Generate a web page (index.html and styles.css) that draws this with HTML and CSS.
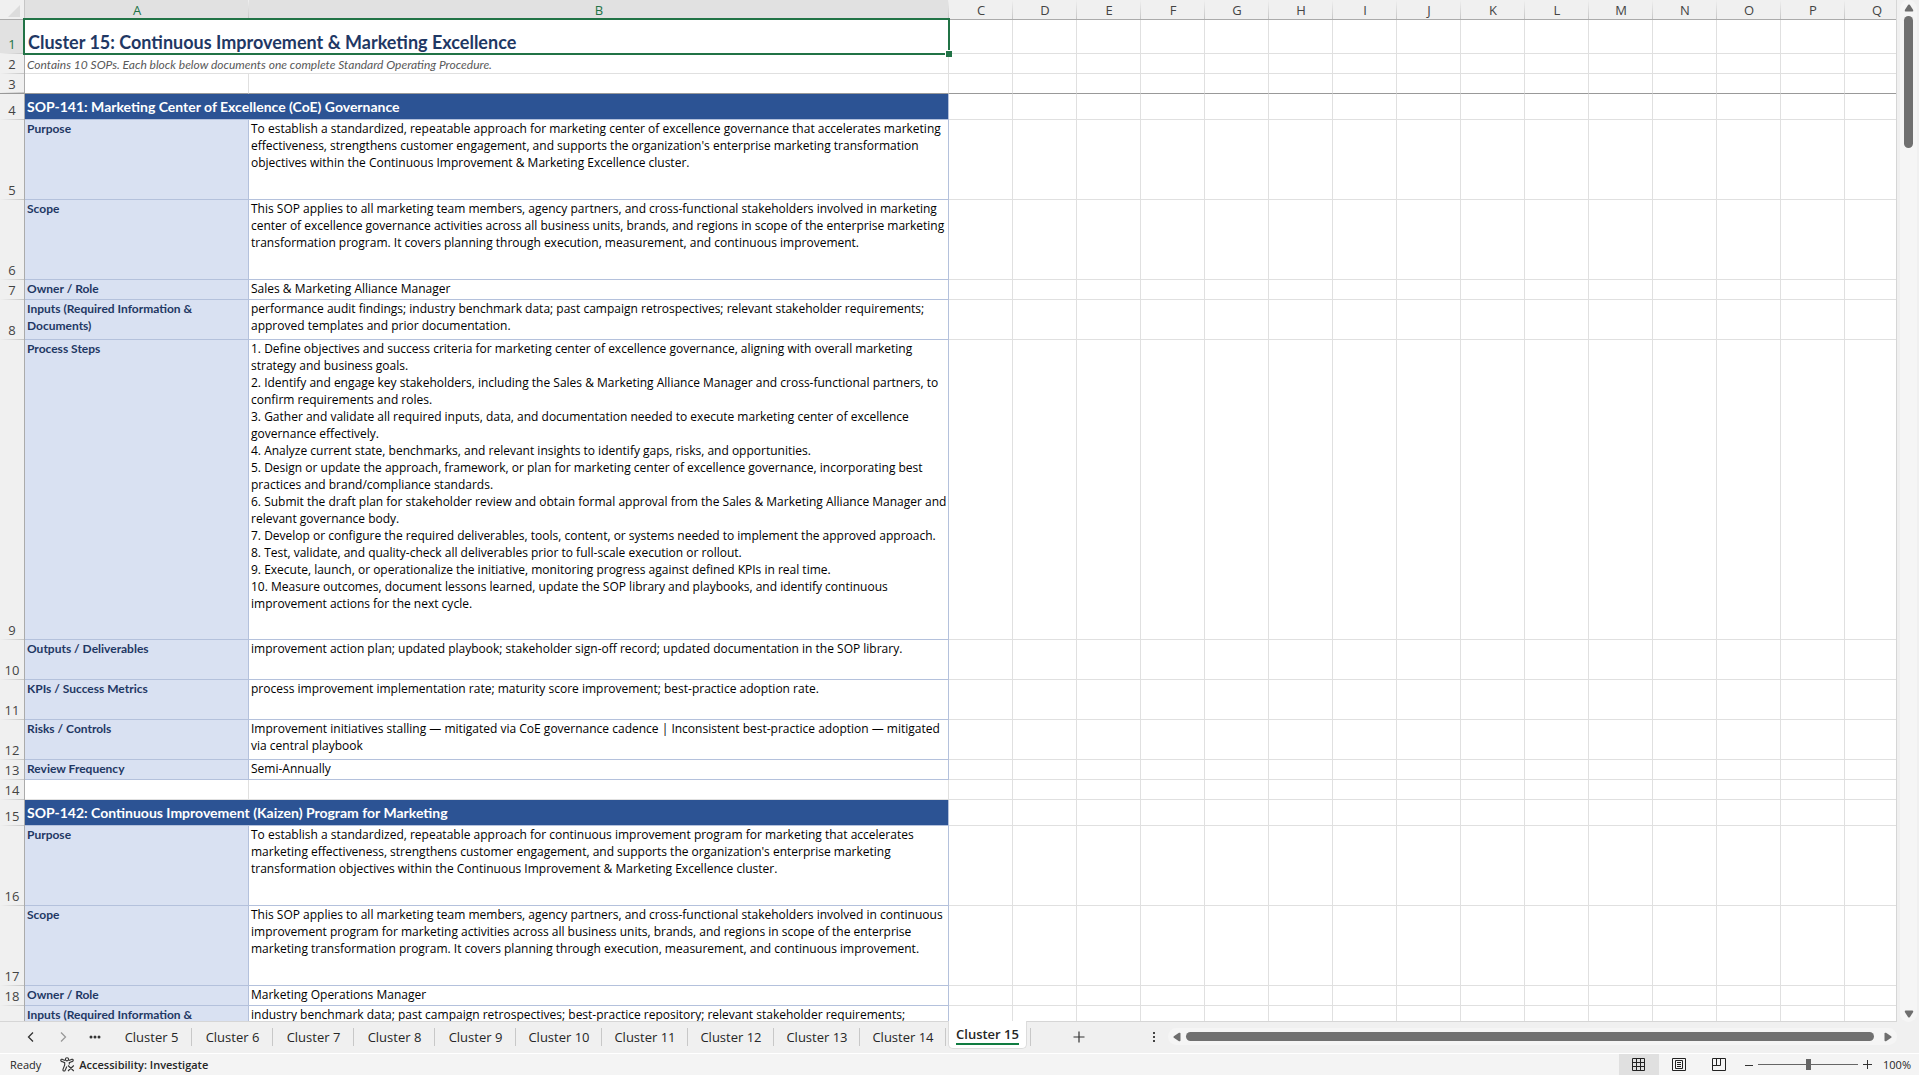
FILE: index.html
```html
<!DOCTYPE html>
<html lang="en">
<head>
    <meta charset="UTF-8">
    <meta name="viewport" content="width=device-width, initial-scale=1.0">
    <title>Marketing SOP Library</title>
    <link rel="stylesheet" href="styles.css">
</head>
<body>
    <main class="workspace">
        <div class="sheet">
            <table id="grid">
                <colgroup>
                    <col class="col-num">
                    <col class="col-a">
                    <col class="col-b">
                    <col class="col-rest" span="15">
                </colgroup>
                <thead>
                    <tr id="letters">
                        <th class="corner"><svg width="12" height="12" viewBox="0 0 12 12"><path d="M12 0v12H0z" fill="#dcdcdc"/></svg></th>
                        <th class="active">A</th>
                        <th class="active">B</th>
                    </tr>
                </thead>
                <tbody>
                    <tr class="row-title"><th class="active">1</th><td colspan="2" class="title">Cluster 15: Continuous Improvement &amp; Marketing Excellence<span class="handle"></span></td></tr>
                    <tr><th>2</th><td colspan="2" class="subtitle">Contains 10 SOPs. Each block below documents one complete Standard Operating Procedure.</td></tr>
                    <tr class="frozen"><th>3</th><td></td><td></td></tr>

                    <tr class="row-section"><th>4</th><td colspan="2" class="section">SOP-141: Marketing Center of Excellence (CoE) Governance</td></tr>
                    <tr class="row-80"><th>5</th><td class="label">Purpose</td><td class="text">To establish a standardized, repeatable approach for marketing center of excellence governance that accelerates marketing effectiveness, strengthens customer engagement, and supports the organization's enterprise marketing transformation objectives within the Continuous Improvement &amp; Marketing Excellence cluster.</td></tr>
                    <tr class="row-80"><th>6</th><td class="label">Scope</td><td class="text">This SOP applies to all marketing team members, agency partners, and cross-functional stakeholders involved in marketing center of excellence governance activities across all business units, brands, and regions in scope of the enterprise marketing transformation program. It covers planning through execution, measurement, and continuous improvement.</td></tr>
                    <tr><th>7</th><td class="label">Owner / Role</td><td class="text">Sales &amp; Marketing Alliance Manager</td></tr>
                    <tr class="row-40"><th>8</th><td class="label">Inputs (Required Information &amp; Documents)</td><td class="text">performance audit findings; industry benchmark data; past campaign retrospectives; relevant stakeholder requirements; approved templates and prior documentation.</td></tr>
                    <tr class="row-300"><th>9</th><td class="label">Process Steps</td><td class="text">
                        <p>1. Define objectives and success criteria for marketing center of excellence governance, aligning with overall marketing strategy and business goals.</p>
                        <p>2. Identify and engage key stakeholders, including the Sales &amp; Marketing Alliance Manager and cross-functional partners, to confirm requirements and roles.</p>
                        <p>3. Gather and validate all required inputs, data, and documentation needed to execute marketing center of excellence governance effectively.</p>
                        <p>4. Analyze current state, benchmarks, and relevant insights to identify gaps, risks, and opportunities.</p>
                        <p>5. Design or update the approach, framework, or plan for marketing center of excellence governance, incorporating best practices and brand/compliance standards.</p>
                        <p>6. Submit the draft plan for stakeholder review and obtain formal approval from the Sales &amp; Marketing Alliance Manager and relevant governance body.</p>
                        <p>7. Develop or configure the required deliverables, tools, content, or systems needed to implement the approved approach.</p>
                        <p>8. Test, validate, and quality-check all deliverables prior to full-scale execution or rollout.</p>
                        <p>9. Execute, launch, or operationalize the initiative, monitoring progress against defined KPIs in real time.</p>
                        <p>10. Measure outcomes, document lessons learned, update the SOP library and playbooks, and identify continuous improvement actions for the next cycle.</p>
                    </td></tr>
                    <tr class="row-40"><th>10</th><td class="label">Outputs / Deliverables</td><td class="text">improvement action plan; updated playbook; stakeholder sign-off record; updated documentation in the SOP library.</td></tr>
                    <tr class="row-40"><th>11</th><td class="label">KPIs / Success Metrics</td><td class="text">process improvement implementation rate; maturity score improvement; best-practice adoption rate.</td></tr>
                    <tr class="row-40"><th>12</th><td class="label">Risks / Controls</td><td class="text">Improvement initiatives stalling — mitigated via CoE governance cadence | Inconsistent best-practice adoption — mitigated via central playbook</td></tr>
                    <tr><th>13</th><td class="label">Review Frequency</td><td class="text">Semi-Annually</td></tr>
                    <tr><th>14</th><td></td><td></td></tr>

                    <tr class="row-section"><th>15</th><td colspan="2" class="section">SOP-142: Continuous Improvement (Kaizen) Program for Marketing</td></tr>
                    <tr class="row-80"><th>16</th><td class="label">Purpose</td><td class="text">To establish a standardized, repeatable approach for continuous improvement program for marketing that accelerates marketing effectiveness, strengthens customer engagement, and supports the organization's enterprise marketing transformation objectives within the Continuous Improvement &amp; Marketing Excellence cluster.</td></tr>
                    <tr class="row-80"><th>17</th><td class="label">Scope</td><td class="text">This SOP applies to all marketing team members, agency partners, and cross-functional stakeholders involved in continuous improvement program for marketing activities across all business units, brands, and regions in scope of the enterprise marketing transformation program. It covers planning through execution, measurement, and continuous improvement.</td></tr>
                    <tr><th>18</th><td class="label">Owner / Role</td><td class="text">Marketing Operations Manager</td></tr>
                    <tr class="row-40"><th></th><td class="label">Inputs (Required Information &amp;</td><td class="text">industry benchmark data; past campaign retrospectives; best-practice repository; relevant stakeholder requirements;</td></tr>
                </tbody>
            </table>
        </div>
        <div class="vscroll">
            <button aria-label="Scroll up"><svg width="10" height="8" viewBox="0 0 10 8"><path d="M4.2.8Q5 0 5.800.8L9.200 6Q9.500 7.500 8.500 7.500H1.500Q.5 7.500.8 6z"/></svg></button>
            <div class="vthumb"></div>
            <button class="down" aria-label="Scroll down"><svg width="10" height="8" viewBox="0 0 10 8"><path d="M4.200 7.200Q5 8 5.800 7.200L9.200 2Q9.500.5 8.500.5H1.500Q.5.5.8 2z"/></svg></button>
        </div>
    </main>

    <nav class="tabbar">
        <div class="tabnav">
            <button aria-label="Previous sheets"><svg width="10" height="12" viewBox="0 0 10 12"><path d="M7 1.500 2.500 6 7 10.500" fill="none" stroke="#333" stroke-width="1.300"/></svg></button>
            <button aria-label="Next sheets"><svg width="10" height="12" viewBox="0 0 10 12"><path d="M3 1.500 7.500 6 3 10.500" fill="none" stroke="#999" stroke-width="1.300"/></svg></button>
            <button aria-label="More sheets"><svg width="12" height="4" viewBox="0 0 12 4"><g fill="#333"><circle cx="2" cy="2" r="1.500"/><circle cx="6" cy="2" r="1.500"/><circle cx="10" cy="2" r="1.500"/></g></svg></button>
        </div>
        <button class="tab">Cluster 5</button>
        <button class="tab">Cluster 6</button>
        <button class="tab">Cluster 7</button>
        <button class="tab">Cluster 8</button>
        <button class="tab">Cluster 9</button>
        <button class="tab wide">Cluster 10</button>
        <button class="tab wide">Cluster 11</button>
        <button class="tab wide">Cluster 12</button>
        <button class="tab wide">Cluster 13</button>
        <button class="tab wide">Cluster 14</button>
        <button class="tab current"><span>Cluster 15</span></button>
        <button class="add" aria-label="New sheet"><svg width="12" height="12" viewBox="0 0 12 12"><path d="M6 .5v11M.5 6h11" stroke="#333" stroke-width="1.200"/></svg></button>
        <button class="grip" aria-label="Resize tabs"><svg width="4" height="12" viewBox="0 0 4 12"><path d="M1 1h2v2H1zM1 5h2v2H1zM1 9h2v2H1z" fill="#444"/></svg></button>
        <div class="hscroll">
            <button aria-label="Scroll left"><svg width="8" height="10" viewBox="0 0 8 10"><path d="M.8 4.200Q0 5 .8 5.800L6 9.200Q7.500 9.500 7.500 8.500V1.500Q7.500.5 6 .8z"/></svg></button>
            <div class="hthumb"></div>
            <button aria-label="Scroll right"><svg width="8" height="10" viewBox="0 0 8 10"><path d="M7.200 4.200Q8 5 7.200 5.800L2 9.200Q.5 9.500.5 8.500V1.500Q.5.5 2 .8z"/></svg></button>
        </div>
    </nav>

    <footer class="statusbar">
        <span class="ready">Ready</span>
        <button class="access">
            <svg width="15" height="15" viewBox="0 0 15 15" fill="none" stroke="#333" stroke-width="1.100"><circle cx="7" cy="2.300" r="1.600"/><path d="M5.300 3.600 2.500 2.400Q1 2 .8 3.100T2 4.600L4.700 5.700V8L3 12.300Q2.700 13.700 3.700 14T5.200 13.200L6.800 9.500M8.700 3.600 11.500 2.400Q13 2 13.200 3.100T12 4.600L9.300 5.700V7.500M8 8.500l5.800 5.500M13.800 8.500 8 14"/></svg>
            Accessibility: Investigate
        </button>
        <div class="views">
            <button class="on" aria-label="Normal"><svg width="14" height="14" viewBox="0 0 14 14" fill="none" stroke="#222"><path d="M.5.5h12v12H.5zM4.500.5v12M8.500.5v12M.5 4.500h12M.5 8.500h12"/></svg></button>
            <button aria-label="Page Layout"><svg width="14" height="14" viewBox="0 0 14 14" fill="none" stroke="#222"><path d="M.5.5h13v12H.5zM3.500 2.500h7v8h-7zM5 4.500h4M5 6.500h4M5 8.500h4"/></svg></button>
            <button aria-label="Page Break Preview"><svg width="14" height="14" viewBox="0 0 14 14" fill="none" stroke="#222"><path d="M.5.5h13v12H.5zM.5 7.500h8v-7M4.500.5v7"/></svg></button>
        </div>
        <div class="zoom">
            <button aria-label="Zoom out"><svg width="8" height="8" viewBox="0 0 8 8"><path d="M0 4.500h8" stroke="#333"/></svg></button>
            <input type="range" min="0" max="100" value="50" aria-label="Zoom">
            <button aria-label="Zoom in"><svg width="9" height="9" viewBox="0 0 9 9"><path d="M0 4.500h9M4.500 0v9" stroke="#333"/></svg></button>
            <span class="percent">100%</span>
        </div>
    </footer>

    <script>
        const letters = 'CDEFGHIJKLMNOPQ';
        const headRow = document.getElementById('letters');

        for (const letter of letters) {
            const th = document.createElement('th');
            th.innerText = letter;
            headRow.appendChild(th);
        }

        // empty cells to the right of column B
        document.querySelectorAll('#grid tbody tr').forEach((row) => {
            for (let i = 0; i < letters.length; i++) {
                row.insertCell(-1);
            }
        });
    </script>
</body>
</html>
```
FILE: styles.css
```css
* {
    box-sizing: border-box;
}
body {
    margin: 0;
    height: 100vh;
    display: flex;
    flex-direction: column;
    overflow: hidden;
    background-color: #f0f0f0;
    font-family: "Open Sans", sans-serif;
    color: #262626;
}
button {
    display: flex;
    align-items: center;
    justify-content: center;
    padding: 0;
    border: none;
    background: none;
    font-family: inherit;
    color: inherit;
}
p {
    margin: 0;
}

/* grid */
.workspace {
    flex: 1;
    min-height: 0;
    display: flex;
}
.sheet {
    flex: 1;
    min-width: 0;
    overflow: hidden;
    border-right: 1px solid #d6d6d6;
    border-bottom: 1px solid #d6d6d6;
    background-color: #fff;
}
table {
    width: 1909px;
    table-layout: fixed;
    border-collapse: separate;
    border-spacing: 0;
}
.col-num {
    width: 25px;
}
.col-a {
    width: 224px;
}
.col-b {
    width: 700px;
}
.col-rest {
    width: 64px;
}
th {
    padding: 0;
    font-size: 13px;
    font-weight: 400;
    line-height: 18px;
    color: #444;
    background-color: #f0f0f0;
}
thead th {
    height: 20px;
    padding-top: 1px;
    border-bottom: 1px solid #ababab;
    background-image: linear-gradient(#f0f0f0, #c6c6c6);
    background-size: 1px 100%;
    background-position: right;
    background-repeat: no-repeat;
}
tbody th {
    padding-bottom: 1px;
    vertical-align: bottom;
    border-right: 1px solid #ababab;
    background-image: linear-gradient(to right, #f0f0f0, #c6c6c6);
    background-size: 100% 1px;
    background-position: bottom;
    background-repeat: no-repeat;
}
th.active {
    background-color: #e1e1e1;
    color: #217346;
}
th.corner {
    padding: 3px 4px 0 0;
    text-align: right;
    line-height: 12px;
    border-right: 1px solid #c6c6c6;
    background-image: none;
}
.corner svg {
    display: block;
    margin-left: auto;
}
tr {
    height: 20px;
}
.row-title {
    height: 34px;
}
.row-section {
    height: 26px;
}
.row-40 {
    height: 40px;
}
.row-80 {
    height: 80px;
}
.row-300 {
    height: 300px;
}
td {
    padding: 0 0 0 2px;
    border-right: 1px solid #e0e0e0;
    border-bottom: 1px solid #e0e0e0;
    font-size: 12px;
    line-height: 17px;
}
.frozen th {
    padding-bottom: 0;
}
.frozen th,
.frozen td {
    border-bottom: 1px solid #999;
}
.title {
    position: relative;
    padding-left: 3px;
    vertical-align: bottom;
    font: bold 18px/22px Lato, sans-serif;
    color: #1f3864;
}
.title::after {
    content: "";
    position: absolute;
    inset: -2px -2px -2px -2px;
    border: 2px solid #217346;
}
.handle {
    position: absolute;
    right: -4px;
    bottom: -4px;
    z-index: 1;
    width: 7px;
    height: 7px;
    border: solid #fff;
    border-width: 1px 0 0 1px;
    background-color: #217346;
}
.subtitle {
    padding-top: 2px;
    font-family: Lato, sans-serif;
    font-style: italic;
    color: #595959;
}
.section {
    border-color: #b4c1dc;
    background-color: #2c5394;
    font: bold 14px/18px Lato, sans-serif;
    color: #fff;
}
.label,
.text {
    vertical-align: top;
    border-color: #b4c1dc;
}
.label {
    padding-right: 24px;
    background-color: #d9e1f2;
    font-family: Lato, sans-serif;
    font-weight: bold;
    color: #1f3864;
}
.text {
    color: #000;
}

/* scroll bars */
.vscroll {
    width: 17px;
    margin: 0 2px 0 3px;
    padding: 4px 0;
    display: flex;
    flex-direction: column;
    align-items: center;
    border-radius: 9px;
    background-color: #f5f5f5;
    fill: #6e6e6e;
}
.vthumb {
    width: 9px;
    height: 13%;
    margin-top: 4px;
    border-radius: 5px;
    background-color: #707070;
}
.vscroll .down {
    margin-top: auto;
}
.hscroll {
    flex: 0 0 38%;
    height: 17px;
    margin: 6px 22px 0 6px;
    padding: 0 5px;
    display: flex;
    align-items: center;
    gap: 5px;
    border-radius: 9px;
    background-color: #f5f5f5;
    fill: #6e6e6e;
}
.hthumb {
    flex: 1;
    height: 9px;
    margin-right: 5px;
    border-radius: 5px;
    background-color: #707070;
}

/* sheet tabs */
.tabbar {
    height: 31px;
    display: flex;
    align-items: flex-start;
}
.tabnav {
    width: 111px;
    height: 30px;
    padding-left: 15px;
    display: flex;
}
.tabnav button {
    width: 32px;
}
.tab {
    position: relative;
    width: 81px;
    height: 30px;
    font-size: 13px;
    line-height: 18px;
    white-space: nowrap;
}
.tab::after {
    content: "";
    position: absolute;
    right: 0;
    top: 6px;
    height: 18px;
    border-right: 1px solid #c8c8c8;
}
.wide {
    width: 86px;
}
.current {
    width: 79px;
    height: 28px;
    margin: -1px 0 0 2px;
    border: 1px solid #dcdcdc;
    border-top: none;
    border-radius: 0 0 5px 5px;
    background-color: #fff;
    font-weight: 600;
}
.current span {
    border-bottom: 2px solid #107c41;
}
.current::after {
    right: -5px;
    top: 7px;
}
.add {
    width: 30px;
    height: 29px;
    margin-left: 37px;
}
.grip {
    width: 16px;
    height: 30px;
    margin-left: auto;
}

/* status bar */
.statusbar {
    height: 22px;
    display: flex;
    align-items: center;
    border-top: 1px solid #fff;
    background-color: #f4f4f4;
    font-size: 11px;
}
.ready {
    margin-left: 10px;
}
.access {
    margin-left: 19px;
    gap: 4px;
    font-size: 11px;
    font-weight: 600;
}
.views {
    margin-left: auto;
    display: flex;
}
.views button {
    width: 40px;
    height: 21px;
}
.views .on {
    background-color: #e0e0e0;
}
.zoom {
    display: flex;
    align-items: center;
}
.zoom button {
    width: 19px;
    height: 21px;
}
.zoom input {
    width: 100px;
    height: 11px;
    margin: 0;
    appearance: none;
    background: linear-gradient(#666, #666) center / 100% 1px no-repeat;
}
.zoom input::-webkit-slider-thumb {
    appearance: none;
    width: 5px;
    height: 11px;
    background-color: #666;
}
.percent {
    width: 42px;
    padding-right: 8px;
    text-align: right;
}
```
